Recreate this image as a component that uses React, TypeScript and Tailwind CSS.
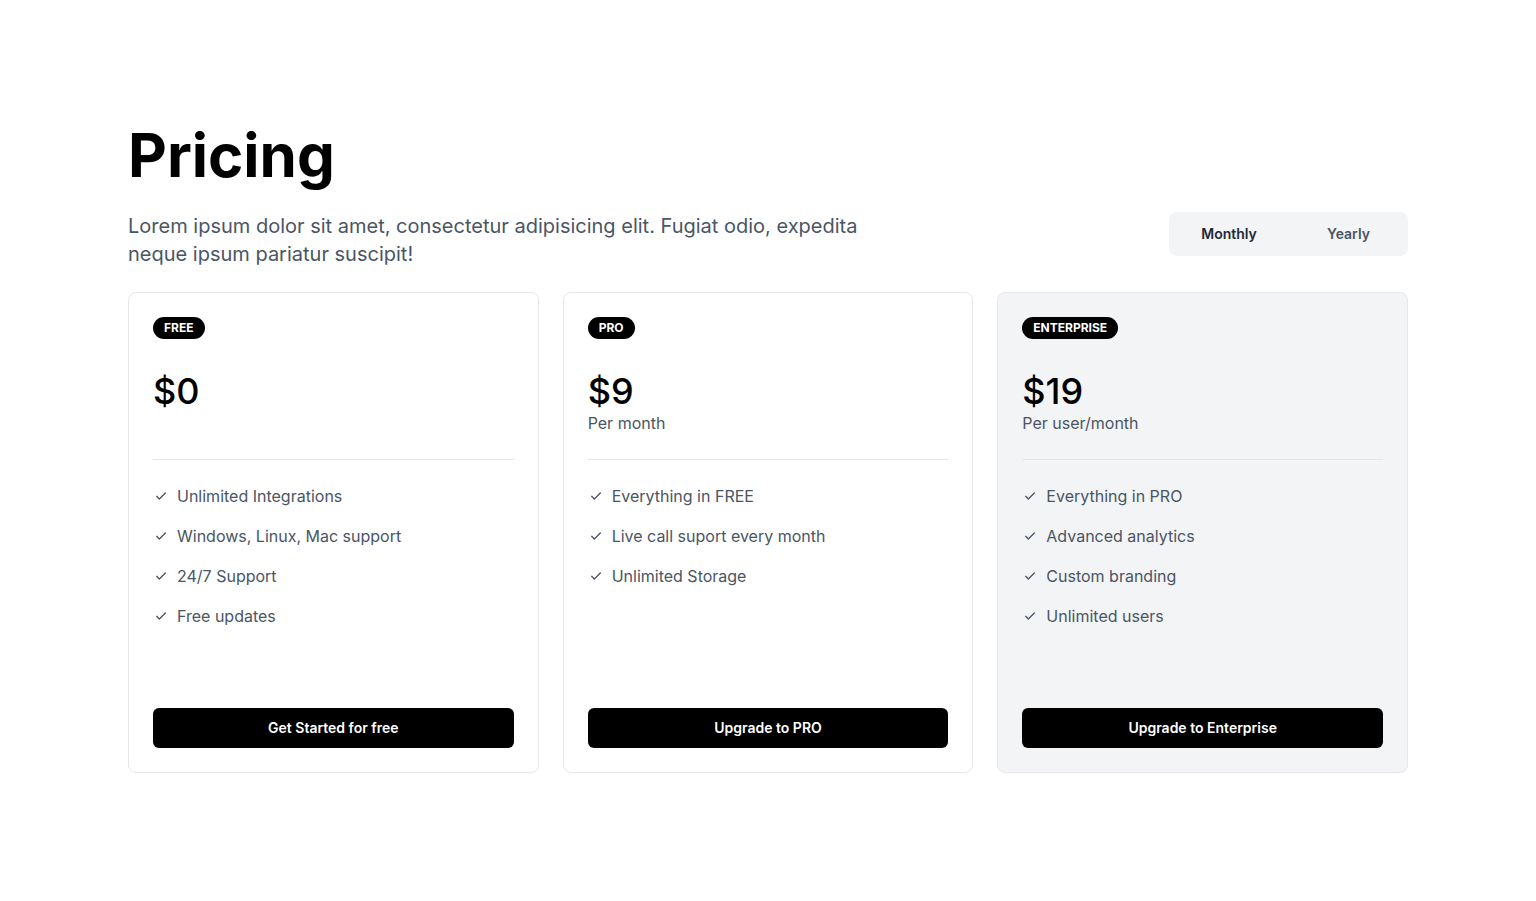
const plans = [
  {
    badge: "FREE",
    price: "$0",
    period: "",
    features: ["Unlimited Integrations", "Windows, Linux, Mac support", "24/7 Support", "Free updates"],
    cta: "Get Started for free",
    highlight: false,
  },
  {
    badge: "PRO",
    price: "$9",
    period: "Per month",
    features: ["Everything in FREE", "Live call suport every month", "Unlimited Storage"],
    cta: "Upgrade to PRO",
    highlight: false,
  },
  {
    badge: "ENTERPRISE",
    price: "$19",
    period: "Per user/month",
    features: ["Everything in PRO", "Advanced analytics", "Custom branding", "Unlimited users"],
    cta: "Upgrade to Enterprise",
    highlight: true,
  },
];

function Check() {
  return (
    <svg className="w-4 h-4 shrink-0 text-gray-600" viewBox="0 0 24 24" fill="none" stroke="currentColor" strokeWidth="2" strokeLinecap="round" strokeLinejoin="round">
      <path d="M5.5 12.5l4 4 9-9" />
    </svg>
  );
}

export default function App() {
  return (
    <div className="bg-white min-h-screen font-['Inter',sans-serif]">
      <div className="max-w-7xl mx-auto pt-[125px] pb-16">
        <h1 className="text-6xl leading-none font-bold text-black">Pricing</h1>
        <div className="mt-[27px] flex items-start justify-between">
          <p className="max-w-3xl text-xl leading-7 text-gray-600">
            Lorem ipsum dolor sit amet, consectetur adipisicing elit. Fugiat odio, expedita neque ipsum pariatur suscipit!
          </p>
          <div className="flex bg-gray-100 rounded-lg">
            <button className="w-[120px] h-11 text-sm font-semibold text-gray-800">Monthly</button>
            <button className="w-[119px] h-11 text-sm font-semibold text-gray-600">Yearly</button>
          </div>
        </div>
        <div className="mt-6 grid grid-cols-3 gap-6">
          {plans.map((p) => (
            <div
              key={p.badge}
              className={`flex flex-col p-6 border border-gray-200 rounded-lg ${p.highlight ? "bg-gray-100" : "bg-white"}`}
            >
              <div className="flex">
                <span className="flex items-center h-[22px] px-[11px] rounded-full bg-black text-white text-xs font-bold">
                  {p.badge}
                </span>
              </div>
              <div className="mt-8 h-16">
                <div className="text-4xl leading-10 font-medium text-black">{p.price}</div>
                {p.period && <div className="text-base leading-6 text-gray-600">{p.period}</div>}
              </div>
              <div className="my-6 border-t border-gray-200" />
              <ul className="space-y-4 mb-20">
                {p.features.map((f) => (
                  <li key={f} className="flex items-center gap-2 text-base leading-6 text-gray-600">
                    <Check />
                    {f}
                  </li>
                ))}
              </ul>
              <button className="mt-auto h-10 w-full rounded-md bg-black text-white text-sm font-semibold">
                {p.cta}
              </button>
            </div>
          ))}
        </div>
      </div>
    </div>
  );
}
